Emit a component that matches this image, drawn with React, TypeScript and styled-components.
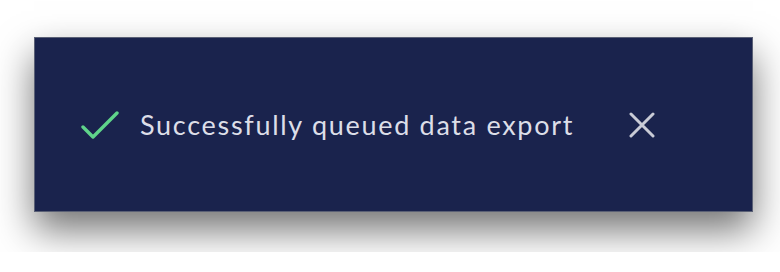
import React from 'react';
import styled, { createGlobalStyle } from 'styled-components';

const GlobalStyle = createGlobalStyle`
  * {
    box-sizing: border-box;
  }
  body {
    margin: 0;
    background-color: #ffffff;
    font-family: Lato, 'Noto Sans', sans-serif;
  }
`;

const Stage = styled.div`
  height: 252px;
  overflow: hidden;
  padding: 37px 27px 0 34px;
  background-color: #ffffff;
`;

const Toast = styled.div`
  display: flex;
  align-items: center;
  width: 719px;
  height: 175px;
  padding-left: 46px;
  background-color: #1a234d;
  border: 1px solid #5a6075;
  box-shadow: 0 18px 36px rgba(0, 0, 0, 0.55);
`;

const IconSlot = styled.span`
  display: flex;
  flex-shrink: 0;
`;

const Message = styled.span`
  margin-left: 21px;
  font-size: 27px;
  line-height: 1;
  color: #dcdee8;
  letter-spacing: 1.7px;
  white-space: nowrap;
`;

const CloseButton = styled.button`
  display: flex;
  margin-left: 55px;
  padding: 0;
  border: none;
  background: none;
  cursor: pointer;
`;

const CheckIcon = () => (
  <svg width="38" height="28" viewBox="0 0 38 28" fill="none">
    <path
      d="M2 16 L12 26 L36 2"
      stroke="#5fd48a"
      strokeWidth="3.4"
      strokeLinecap="round"
      strokeLinejoin="round"
    />
  </svg>
);

const CloseIcon = () => (
  <svg width="26" height="26" viewBox="0 0 26 26" fill="none">
    <path
      d="M2 2 L24 24 M24 2 L2 24"
      stroke="#c9cbd6"
      strokeWidth="3"
      strokeLinecap="round"
    />
  </svg>
);

const App = () => (
  <Stage>
    <GlobalStyle />
    <Toast>
      <IconSlot>
        <CheckIcon />
      </IconSlot>
      <Message>Successfully queued data export</Message>
      <CloseButton aria-label="Close">
        <CloseIcon />
      </CloseButton>
    </Toast>
  </Stage>
);

export default App;
